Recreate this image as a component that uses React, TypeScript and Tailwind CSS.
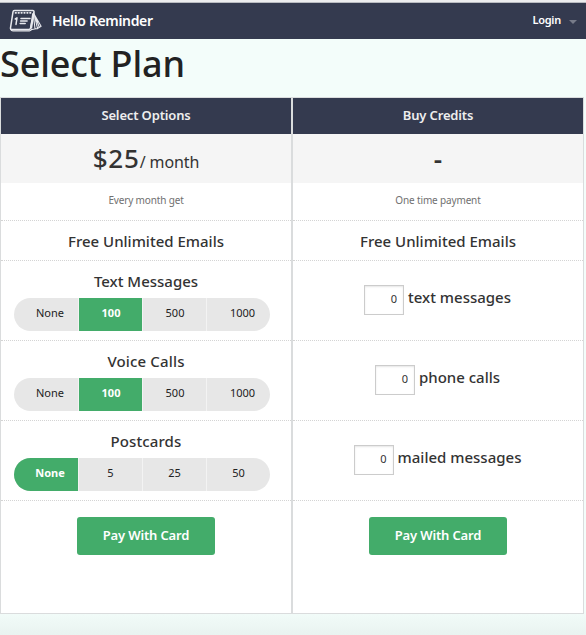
import { ReactNode } from "react";

const OPTIONS = [
  { title: "Text Messages", tracking: "tracking-[0px]", values: ["None", "100", "500", "1000"], selected: 1 },
  { title: "Voice Calls", tracking: "tracking-[0.15px]", values: ["None", "100", "500", "1000"], selected: 1 },
  { title: "Postcards", tracking: "tracking-[0.1px]", values: ["None", "5", "25", "50"], selected: 0 },
];

const CREDITS = ["text messages", "phone calls", "mailed messages"];

// left padding that nudges each label inside its segment
const SEGMENT_PADS = ["pl-[8px]", "pl-[1px]", "pl-[1px]", "pl-[8px]"];
const SHORT_PADS = ["pl-[8px]", "pl-0", "pl-0", "pl-0"];

function Logo() {
  return (
    <svg width="36" height="26" viewBox="0 0 36 26" fill="none" stroke="#e8e9ee" strokeLinejoin="round" strokeLinecap="round">
      <path d="M6.5 2.5h18.2c1 0 1.5.6 1.3 1.500l-3.400 16c-.2 1-.8 1.500-1.800 1.500H4c-1.200 0-1.700-.6-1.500-1.700l2.500-16c.1-.8.6-1.300 1.500-1.300z" strokeWidth="1.500" />
      <path d="M2.600 21.200c.5 1.100 1.200 1.600 2.400 1.600h16.500c1.200 0 1.800-.5 2.300-1.500" strokeWidth="1.200" />
      <path d="M7.500 4.800h16" strokeWidth="1.700" strokeDasharray="0.600 2.300" />
      <path d="M7.300 11l1.700-1.100-1 6.500" strokeWidth="1.500" />
      <path d="M13 10.500h9M12.600 13h6.500M12.200 15.500h5" strokeWidth="1.500" />
      <path d="M25.200 6l-2 13.500" strokeWidth="2.200" />
      <path d="M25.800 4.500l3.700 16-5.700 1M26.300 6.500l6.800 11.700-4 2.600M26 5.500l5.200 13.500M25.500 8l1.500 12.800" strokeWidth="1.100" />
    </svg>
  );
}

function Column({ title, price, note, children }: { title: string; price: ReactNode; note: string; children: ReactNode }) {
  return (
    <section className="h-[517px] w-[292px] border border-[#dadcdd] bg-white text-center text-[#333]">
      <h2 className="h-9 bg-[#343a4f] text-[13px] font-semibold leading-[35px] tracking-[-0.15px] text-[#eee]">{title}</h2>
      <div className="h-[49px] bg-[#f5f5f5] leading-[49px]">{price}</div>
      <p className="h-[38px] border-b border-dotted border-[#d4d4d4] text-[10px] leading-[35px] tracking-[-0.15px] text-[#707070]">
        {note}
      </p>
      <div className="h-10 border-b border-dotted border-[#d4d4d4] text-[15px] font-medium leading-[41px]">
        Free Unlimited Emails
      </div>
      {children}
      <div className="flex justify-center pt-4">
        <button className="h-[38px] w-[138px] rounded-[3px] bg-[#43ac6a] pb-px text-[13px] font-semibold tracking-[-0.15px] text-white">
          Pay With Card
        </button>
      </div>
    </section>
  );
}

function SegmentedControl({ values, selected }: { values: string[]; selected: number }) {
  const pads = values[3] === "1000" ? SEGMENT_PADS : SHORT_PADS;
  return (
    <div className="ml-[13px] flex h-[33px] w-64 overflow-hidden rounded-full bg-[#e7e7e7]">
      {values.map((value, i) => (
        <button
          key={value}
          className={[
            "w-16 pb-0.5 text-[11px]",
            i > 0 ? "border-l border-[#f3f3f3]" : "",
            pads[i],
            i === selected ? "bg-[#43ac6a] font-bold text-white" : "text-[#222]",
            i === selected && i > 0 ? "tracking-[0.1px]" : "",
          ].join(" ")}
        >
          {value}
        </button>
      ))}
    </div>
  );
}

export default function App() {
  return (
    <main className="h-[635px] w-[586px] overflow-hidden bg-[linear-gradient(180deg,#f3fdfa_0%,#f3fdfa_96%,#e9f3f0_100%)] font-['Noto_Sans',sans-serif]">
      <header className="flex h-[39px] items-center justify-between border-t-2 border-[#ececee] bg-[#343a4f] text-white shadow-[inset_0_1px_0_#b9bbc1]">
        <div className="flex items-center pl-[8px] pt-px">
          <Logo />
          <span className="ml-[8px] pb-0.5 text-[14px] font-semibold tracking-[-0.35px]">Hello Reminder</span>
        </div>
        <div className="flex items-center gap-2 pr-[9px] text-[11px] font-semibold tracking-[-0.25px]">
          Login
          <span className="mt-0.5 h-0 w-0 border-x-4 border-t-4 border-x-transparent border-t-[#777b89]" />
        </div>
      </header>

      <h1 className="h-[58px] text-[36px] font-medium leading-[50px] tracking-[-0.15px] text-[#222]">Select Plan</h1>

      <div className="flex">
        <Column
          title="Select Options"
          note="Every month get"
          price={
            <>
              <span className="text-[26px] font-medium tracking-[0.8px]">$25</span>
              <span className="text-[16px] tracking-[-0.1px]">/ month</span>
            </>
          }
        >
          {OPTIONS.map((option) => (
            <div key={option.title} className="h-20 border-b border-dotted border-[#d4d4d4] pt-[9px]">
              <h3 className={`h-7 text-[15px] font-medium leading-[23px] ${option.tracking}`}>{option.title}</h3>
              <SegmentedControl values={option.values} selected={option.selected} />
            </div>
          ))}
        </Column>

        <Column title="Buy Credits" note="One time payment" price={<span className="text-[26px] font-semibold">-</span>}>
          {CREDITS.map((label) => (
            <div key={label} className="flex h-20 items-start justify-center border-b border-dotted border-[#d4d4d4] pt-6">
              <input
                type="text"
                defaultValue="0"
                className="h-[30px] w-10 border border-[#ccc] bg-white pb-[3px] pr-[6px] text-right text-[11px] shadow-[inset_0_1px_2px_rgba(0,0,0,0.1)]"
              />
              <span className="ml-1 pr-px text-[15px] font-medium leading-[25px]">{label}</span>
            </div>
          ))}
        </Column>
      </div>
    </main>
  );
}
